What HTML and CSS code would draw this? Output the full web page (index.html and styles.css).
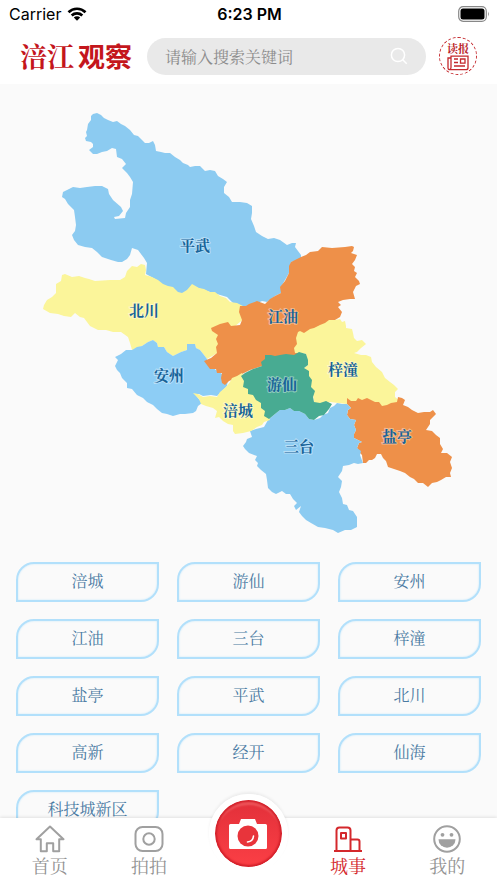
FILE: index.html
```
<!DOCTYPE html>
<html lang="zh-CN">
<head>
    <meta charset="UTF-8">
    <meta name="viewport" content="width=device-width, initial-scale=1.0">
    <title>涪江观察</title>
    <link rel="stylesheet" href="styles.css">
</head>
<body>

    <div class="status-bar">
        <div class="carrier">
            <span>Carrier</span>
            <svg class="wifi" viewBox="0 0 20 14" aria-hidden="true">
                <path d="M1.5 5.2a12.2 12.2 0 0 1 17 0M4.7 8.4a7.7 7.7 0 0 1 10.6 0" fill="none" stroke="#000" stroke-width="2.7"/>
                <path d="M10 13.8l-3.2-3.3a4.6 4.6 0 0 1 6.4 0z"/>
            </svg>
        </div>
        <span class="time">6:23 PM</span>
        <svg class="battery" viewBox="0 0 32 16" aria-hidden="true">
            <rect x="0.7" y="0.7" width="27.6" height="14.6" rx="4.5" fill="none" stroke="#888" stroke-width="1.2"/>
            <rect x="2.5" y="2.5" width="24" height="11" rx="2.5"/>
            <path d="M30 5.5q1.8 2.5 0 5z" fill="#888"/>
        </svg>
    </div>

    <header class="header">
        <h1 class="logo"><span class="logo-brush">涪江</span><span class="logo-block">观察</span></h1>
        <form class="search">
            <input type="search" class="search-input" placeholder="请输入搜索关键词" aria-label="请输入搜索关键词">
            <button type="button" class="search-button" aria-label="搜索">
                <svg viewBox="0 0 18 18" aria-hidden="true">
                    <circle cx="8" cy="8" r="6.6"/>
                    <path d="M12.7 12.7l4 4"/>
                </svg>
            </button>
        </form>
        <button type="button" class="paper-button">
            <span>读报</span>
            <svg viewBox="0 0 22 16" aria-hidden="true">
                <path d="M4 3V1.2h17v11.5q0 2-2 2H3q-2 0-2-2V3h3v9.5q0 2-1.5 2"/>
                <path d="M7 4h4M7 7.5h4M7 11h11M13.5 4H18v4.2h-4.500z"/>
            </svg>
        </button>
    </header>

    <main class="content">
        <svg class="map" viewBox="0 84 497 460" role="img" aria-label="绵阳地图">
            <!-- 平武 -->
            <path class="blue" d="M97 113L101 115L104 118L108 120L113 122L117 121L121 124L125 126L130 130L134 135L138 136L142 140L145 143L149 143L153 141L155 145L156 151L161 152L165 153L170 153L175 157L180 160L183 163L188 165L190 167L195 166L200 166L205 171L210 170L215 171L218 176L223 179L227 182L224 187L224 193L229 197L232 202L240 202L247 203L252 206L252 213L251 219L254 226L256 232L262 236L268 239L274 238L280 240L287 245L292 243L296 243L295 247L301 255L301 259L291 262L289 273L281 287L281 293L275 296L267 302L262 301L243 310L236 306L227 297L210 292L192 286L182 295L165 286L155 279L146 274L147 263L144 258L138 250L132 248L130 255L127 259L122 262L118 262L111 260L102 257L97 252L92 248L85 247L78 245L74 240L72 235L75 231L76 225L75 217L74 210L68 204L65 199L62 197L63 192L67 190L73 187L80 188L87 187L95 186L102 186L108 189L109 194L113 200L121 207L123 211L119 216L114 217L115 219L125 218L126 213L130 207L130 200L132 194L133 182L130 177L127 173L122 168L126 164L122 159L117 157L116 149L112 148L107 151L102 152L97 154L93 154L89 150L93 147L93 144L91 142L86 141L85 138L87 136L86 132L87 130L88 124L91 120L91 116L93 114Z"/>
            <!-- 北川 -->
            <path class="yellow" d="M43 309L44 305L47 300L52 297L56 293L56 284L61 281L62 275L65 274L72 277L79 276L85 278L89 279L95 281L110 280L120 280L125 277L127 271L132 266L137 267L141 264L145 265L146 270L145 275L152 277L158 280L163 284L168 286L173 287L178 292L182 293L187 290L192 284L199 288L204 289L210 292L215 292L220 296L226 298L230 302L237 303L243 306L246 317L228 332L222 342L219 352L207 359L204 355L200 350L196 348L195 344L187 344L187 350L181 352L173 356L167 352L164 347L158 347L157 343L153 340L148 342L142 346L132 350L130 343L128 337L121 332L113 332L106 330L98 330L90 326L84 318L80 317L75 313L71 317L64 316L58 314L50 313Z"/>
            <!-- 安州 -->
            <path class="sky" d="M115 357L121 354L126 350L132 350L137 347L142 346L148 342L153 340L157 343L158 347L164 347L167 352L173 356L181 352L187 350L187 344L195 344L196 348L200 350L204 355L207 359L210 366L228 378L227 386L222 391L217 396L211 395L203 396L199 394L195 394L198 398L202 403L198 406L196 411L193 413L185 414L180 414L173 416L167 414L162 413L157 409L153 405L147 402L143 398L137 395L132 389L127 388L127 383L122 378L120 373L117 370L115 366L118 360Z"/>
            <!-- 江油 -->
            <path class="orange" d="M301 257L306 255L310 252L318 251L322 247L332 248L345 247L352 246L354 247L353 251L351 253L357 255L355 260L352 264L355 267L354 271L357 273L355 277L359 281L360 284L356 286L353 292L355 299L350 299L343 300L338 302L341 305L338 307L342 312L340 317L335 320L317 332L304 345L301 356L284 358L262 366L250 370L240 375L234 379L229 381L225 385L222 383L221 378L222 373L217 373L216 369L210 369L204 361L211 358L217 353L216 347L218 344L216 339L218 335L212 331L211 328L220 324L228 322L231 326L240 325L242 320L239 312L240 306L246 306L249 304L257 301L265 304L270 299L275 296L281 293L280 287L285 281L289 273L289 266L291 262Z"/>
            <!-- 梓潼 -->
            <path class="yellow" d="M298 332L300 331L304 333L310 329L314 328L320 325L325 323L329 320L335 320L340 319L342 322L345 321L346 326L346 328L352 329L353 333L354 338L357 341L362 340L366 344L361 348L357 352L354 353L361 355L366 355L371 357L372 362L376 367L382 372L385 378L390 382L394 385L398 389L395 392L395 397L401 402L386 409L349 406L347 404L330 402L320 405L314 402L313 394L311 388L310 378L304 368L308 365L306 354L301 353L295 353L294 348L297 344L296 338Z"/>
            <!-- 盐亭 -->
            <path class="orange" d="M347 398L351 401L356 401L358 398L362 400L367 398L371 400L375 402L379 402L382 406L387 405L391 403L397 402L398 397L402 398L405 400L403 405L408 407L412 410L418 413L424 412L430 412L433 410L436 414L430 420L430 424L426 430L432 431L436 435L440 438L440 444L443 449L441 453L447 453L452 457L450 462L452 468L450 473L451 477L446 477L441 480L437 482L432 483L428 487L423 483L418 483L414 479L410 477L405 473L400 471L394 469L388 467L386 461L383 458L381 454L377 454L375 458L372 460L369 460L366 463L363 463L362 455L360 453L357 448L359 443L362 442L354 438L354 434L356 430L354 425L356 420L350 419L347 415L348 410L351 408L347 404Z"/>
            <!-- 三台 -->
            <path class="blue" d="M290 408L294 411L299 411L305 414L309 419L314 420L320 418L323 415L328 413L330 408L334 406L337 403L342 404L347 404L351 408L348 410L347 415L350 419L356 420L354 425L356 430L354 434L354 438L362 442L359 443L357 448L361 451L360 455L363 463L358 464L354 463L349 465L343 466L342 471L338 477L342 481L341 487L339 492L342 498L343 504L347 505L349 510L353 511L357 517L357 527L351 530L345 530L338 533L333 530L325 528L318 527L311 523L306 520L302 516L299 512L301 506L296 510L294 506L297 503L293 499L290 494L286 494L282 491L276 494L272 492L268 488L267 480L266 474L261 470L257 466L258 463L255 460L257 456L249 453L245 449L243 446L246 442L247 439L252 437L250 431L256 429L264 427L268 420L275 414L280 410L285 410Z"/>
            <!-- 涪城 -->
            <path class="yellow" d="M193 393L198 394L203 397L210 396L217 397L220 392L226 387L230 382L232 378L237 376L242 373L248 385L262 399L270 420L264 422L262 425L257 427L251 431L243 433L235 434L233 431L233 425L228 424L223 421L219 417L215 418L217 411L213 408L206 406L201 404L199 399Z"/>
            <!-- 游仙 -->
            <path class="green" d="M241 376L245 373L253 369L262 366L261 362L265 359L265 355L271 355L275 356L280 355L286 354L294 355L299 352L306 354L308 360L308 365L304 368L309 371L309 376L312 380L311 387L315 391L313 397L314 402L320 403L326 401L332 404L329 409L324 415L319 416L314 420L309 419L305 414L299 411L294 411L290 408L285 410L280 410L275 414L269 419L264 416L265 411L261 408L261 403L256 400L253 395L248 394L248 389L243 387L244 381Z"/>
            <g class="map-labels">
                <text x="195" y="251">平武</text>
                <text x="144" y="316">北川</text>
                <text x="283" y="322">江油</text>
                <text x="169" y="381">安州</text>
                <text x="343" y="375">梓潼</text>
                <text x="282" y="390">游仙</text>
                <text x="238" y="416">涪城</text>
                <text x="397" y="442">盐亭</text>
                <text x="299" y="452">三台</text>
            </g>
        </svg>

        <div class="areas">
            <button type="button">涪城</button>
            <button type="button">游仙</button>
            <button type="button">安州</button>
            <button type="button">江油</button>
            <button type="button">三台</button>
            <button type="button">梓潼</button>
            <button type="button">盐亭</button>
            <button type="button">平武</button>
            <button type="button">北川</button>
            <button type="button">高新</button>
            <button type="button">经开</button>
            <button type="button">仙海</button>
            <button type="button">科技城新区</button>
        </div>
    </main>

    <nav class="tab-bar">
        <a href="#" class="tab">
            <svg viewBox="0 0 30 28" aria-hidden="true">
                <path d="M15 1.5L1.5 14.2h4.3v12h6v-8h6.4v8h6v-12h4.3z"/>
            </svg>
            <span>首页</span>
        </a>
        <a href="#" class="tab">
            <svg viewBox="0 0 30 28" aria-hidden="true">
                <rect x="1.5" y="2" width="27" height="24" rx="7"/>
                <circle cx="15" cy="14" r="5.7"/>
            </svg>
            <span>拍拍</span>
        </a>
        <a href="#" class="camera" aria-label="拍照">
            <svg viewBox="0 0 40 34" aria-hidden="true">
                <path fill="#fff" d="M2.500 7H11l2-5h14l2 5h8.500q1.500 0 1.500 1.500v22q0 1.500-1.500 1.500h-35Q1 32 1 30.500v-22Q1 7 2.500 7z"/>
                <circle cx="20" cy="19" r="10.500" fill="#e8343b"/>
                <path d="M25.500 19q-0.500 5.500-6 6" fill="none" stroke="#fff" stroke-width="1.6" stroke-linecap="round"/>
            </svg>
        </a>
        <a href="#" class="tab active">
            <svg viewBox="0 0 30 28" aria-hidden="true">
                <path d="M1 26h28M3.500 26V5.500q0-3 3-3h8q3 0 3 3V26M17.500 14.500h7q2 0 2 2V26M8 8h5v5.500H8z"/>
            </svg>
            <span>城事</span>
        </a>
        <a href="#" class="tab">
            <svg viewBox="0 0 30 28" aria-hidden="true">
                <circle cx="15" cy="14" r="12.800"/>
                <path class="solid" d="M6.500 14.200h17a8.500 8.500 0 0 1-17 0z"/>
                <circle class="solid" cx="10.500" cy="9.800" r="1.900"/>
                <circle class="solid" cx="19.500" cy="9.800" r="1.900"/>
            </svg>
            <span>我的</span>
        </a>
    </nav>

</body>
</html>
```
FILE: styles.css
```
* {
    box-sizing: border-box;
}

body {
    display: flex;
    flex-direction: column;
    height: 100vh;
    margin: 0;
    overflow: hidden;
    background-color: #fafafa;
    color: #333;
    font-family: "Noto Serif CJK SC", "Noto Sans CJK SC", serif;
}

button, input {
    font-family: inherit;
}

/* Status bar */
.status-bar {
    display: grid;
    grid-template-columns: 1fr auto 1fr;
    align-items: center;
    height: 28px;
    padding: 0 7px 0 9px;
    background-color: white;
    color: #000;
    font-family: Inter, "Liberation Sans", sans-serif;
    font-size: 16px;
    line-height: 28px;
    flex-shrink: 0;
}

.carrier {
    display: flex;
    align-items: center;
    gap: 6px;
}

.wifi {
    width: 20px;
    height: 14px;
}

.time {
    font-weight: 600;
}

.battery {
    width: 32px;
    height: 16px;
    justify-self: end;
}

/* Header */
.header {
    display: flex;
    align-items: center;
    height: 56px;
    padding: 0 20px;
    background-color: white;
    flex-shrink: 0;
}

.logo {
    display: flex;
    gap: 4px;
    width: 127px;
    margin: 0;
    color: #c4161c;
    font-size: 27px;
    font-weight: bold;
    line-height: 36px;
    white-space: nowrap;
}

.logo-block {
    font-family: "Noto Sans CJK SC", sans-serif;
}

.search {
    display: flex;
    align-items: center;
    flex: 1;
    height: 37px;
    margin-right: 13px;
    padding: 0 18px;
    border-radius: 20px;
    background-color: #e9e9e9;
}

.search-input {
    flex: 1;
    min-width: 0;
    padding: 0;
    border: none;
    outline: none;
    background: none;
    color: #333;
    font-size: 16px;
}

.search-input::placeholder {
    color: #8c8c8c;
}

.search-button {
    width: 18px;
    height: 18px;
    padding: 0;
    border: none;
    background: none;
}

.search-button svg {
    display: block;
    fill: none;
    stroke: white;
    stroke-width: 1.5;
}

.paper-button {
    display: flex;
    flex-direction: column;
    align-items: center;
    justify-content: center;
    width: 38px;
    height: 38px;
    padding: 0;
    border: 1px dashed #c4282d;
    border-radius: 50%;
    background: none;
    color: #b8161c;
    font-size: 11px;
    font-weight: bold;
    line-height: 13px;
}

.paper-button svg {
    width: 22px;
    height: 16px;
    fill: none;
    stroke: #c4282d;
    stroke-width: 1.3;
}

/* Map */
.content {
    flex: 1;
    min-height: 0;
    overflow: hidden;
}

.map {
    display: block;
    width: 100%;
}

.blue {
    fill: #8ccbf1;
}

.sky {
    fill: #8dcdf5;
}

.yellow {
    fill: #fbf59a;
}

.orange {
    fill: #ee9049;
}

.green {
    fill: #48ab92;
}

.map-labels {
    fill: #176399;
    stroke: rgba(255, 255, 255, 0.4);
    stroke-width: 2px;
    paint-order: stroke;
    font-size: 15px;
    font-weight: bold;
    text-anchor: middle;
}

/* Area buttons */
.areas {
    display: grid;
    grid-template-columns: repeat(3, 1fr);
    gap: 17px 18px;
    padding: 18px 16px;
}

.areas button {
    height: 40px;
    padding: 0 0 2px;
    border: 2px solid #b2e0fb;
    border-radius: 18px 0;
    background-color: #fafafa;
    box-shadow: inset 0 0 2px #c2e7fc;
    color: #4a7ba3;
    font-size: 16px;
    line-height: 24px;
}

/* Bottom tabs */
.tab-bar {
    display: grid;
    grid-template-columns: repeat(5, 1fr);
    height: 65px;
    background-color: white;
    box-shadow: 0 -1px 3px rgba(0, 0, 0, 0.1);
    flex-shrink: 0;
}

.tab {
    display: flex;
    flex-direction: column;
    align-items: center;
    padding-top: 7px;
    color: #929292;
    font-size: 18px;
    line-height: 24px;
    text-decoration: none;
}

.tab svg {
    width: 30px;
    height: 28px;
    fill: none;
    stroke: #a0a0a0;
    stroke-width: 2;
    stroke-linejoin: round;
}

.tab .solid {
    fill: #a0a0a0;
    stroke: none;
}

.active {
    color: #d4282c;
}

.active svg {
    stroke: #d4282c;
}

.camera {
    display: flex;
    align-items: center;
    justify-content: center;
    justify-self: center;
    width: 79px;
    height: 79px;
    margin-top: -24px;
    border: 6px solid white;
    border-radius: 50%;
    background: linear-gradient(#e2303a, #fb3f45) padding-box;
    box-shadow: 0 -2px 3px rgba(0, 0, 0, 0.06), inset 0 0 2px 2px #d3202a, inset 0 5px 2px #ee565b;
}

.camera svg {
    width: 40px;
    height: 34px;
}
```
